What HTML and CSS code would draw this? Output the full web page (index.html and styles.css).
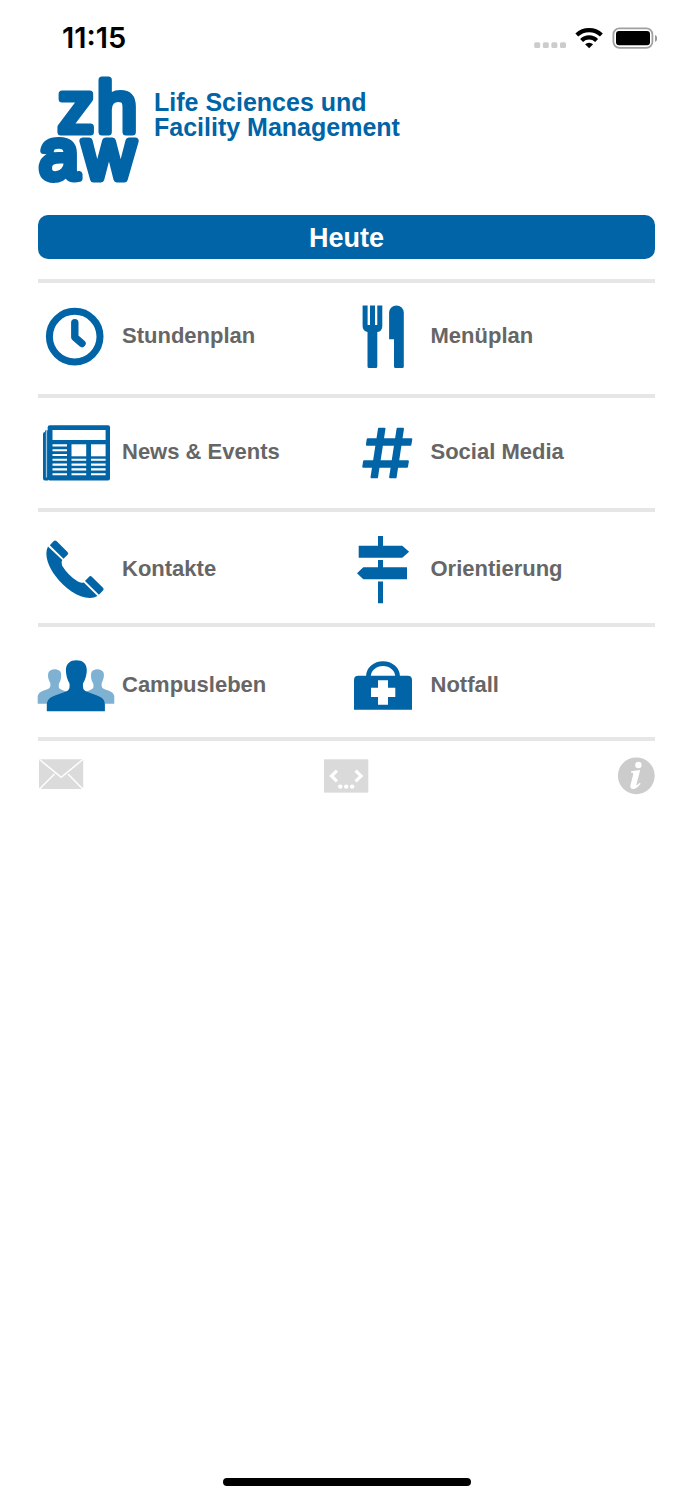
FILE: index.html
```html
<!DOCTYPE html>
<html lang="de">
<head>
<meta charset="utf-8">
<meta name="viewport" content="width=device-width, initial-scale=1">
<title>ZHAW Life Sciences und Facility Management</title>
<link rel="stylesheet" href="styles.css">
</head>
<body>
<div class="screen">
  <div class="status">
    <time class="status__time">11:15</time>
    <div class="status__icons">
      <svg width="32" height="24" viewBox="534 25 32 24" fill="#ccc" aria-hidden="true">
        <rect x="534.2" y="41.3" width="6" height="5.8" rx="1.5"/><rect x="542.8" y="41.3" width="6" height="5.8" rx="1.5"/><rect x="551.4" y="41.3" width="6" height="5.8" rx="1.5"/><rect x="560" y="41.3" width="6" height="5.8" rx="1.5"/>
      </svg>
      <svg width="28" height="24" viewBox="575 25 28 24" aria-hidden="true">
        <g fill="none" stroke="#000" stroke-width="4.2"><path d="M576.8 34a18 18 0 0 1 24.6 0"/><path d="M581.6 39.400a10.800 10.800 0 0 1 15 0"/></g>
        <path d="M589.100 47.200l-4-3.900a6 6 0 0 1 8 0z"/>
      </svg>
      <svg width="45" height="24" viewBox="612 25 45 24" aria-hidden="true">
        <rect x="613.400" y="27.400" width="39" height="19.400" rx="6" fill="none" stroke="#a0a0a0" stroke-width="1.800"/>
        <rect x="616" y="30" width="34" height="14.200" rx="3"/>
        <path d="M655 34v7q2.300-1 2.300-3.500t-2.300-3.500z" fill="#999"/>
      </svg>
    </div>
  </div>

  <main class="content">
    <header class="brand">
      <svg class="brand__logo" width="102" height="110" viewBox="37 75 102 110" role="img" aria-label="zhaw">
        <text x="58 97" y="132">zh</text>
        <text x="39 83" y="179">aw</text>
      </svg>
      <h1 class="brand__name">Life Sciences und<br>Facility Management</h1>
    </header>

    <button class="today" type="button">Heute</button>

    <nav class="menu">
      <div class="menu__row">
        <a class="item" href="#stundenplan">
          <svg class="item__icon" viewBox="38 296 84 80" aria-hidden="true">
            <g fill="none" stroke="#0064a6"><circle cx="74.700" cy="336.600" r="25.300" stroke-width="7"/><path d="M74.800 322.800V337.200L82 343.600" stroke-width="7.400" stroke-linecap="round" stroke-linejoin="round"/></g>
          </svg>
          <span>Stundenplan</span>
        </a>
        <a class="item" href="#menueplan">
          <svg class="item__icon" viewBox="347 296 84 80" aria-hidden="true">
            <path d="M362.600 305.500H367.600V325H370V305.500H375V325H377.300V305.500H382.300V326Q382.300 331.500 377.300 332V366.500Q377.300 368 375.800 368H369Q367.500 368 367.500 366.500V332Q362.600 331 362.600 326Z"/>
            <path d="M389.100 339.200V312.800A7.300 7.300 0 0 1 403.800 312.800V366.500Q403.800 368 402.300 368H395.500Q394 368 394 366.500V339.200Z"/>
          </svg>
          <span>Menüplan</span>
        </a>
      </div>
      <div class="menu__row">
        <a class="item" href="#news">
          <svg class="item__icon" viewBox="38 412 84 80" aria-hidden="true">
            <path d="M43 434q0-2 2-2V430.500h3V480.500H45q-2 0-2-2z"/>
            <path d="M46.500 431v46.500" fill="none" stroke="#9dc3de" stroke-width="1.300"/>
            <rect x="47.700" y="425.300" width="62.300" height="55.200" rx="2"/>
            <g fill="#fff"><rect x="52.500" y="430" width="53.100" height="10"/><rect x="71.500" y="444.300" width="14.700" height="12"/><rect x="91" y="444.300" width="14.600" height="12"/></g>
            <g fill="none" stroke="#fff" stroke-width="2.100">
              <path d="M52.500 445.400H67M52.500 450.200H67M52.500 455H67M52.500 459.800H67M52.500 464.600H67M52.500 469.400H67M52.500 474.200H67"/>
              <path d="M71.500 459.800H86.200M71.500 464.600H86.200M71.500 469.400H86.200M71.500 474.200H86.200M91 459.800H105.600M91 464.600H105.600M91 469.400H105.600M91 474.200H105.600"/>
            </g>
          </svg>
          <span>News &amp; Events</span>
        </a>
        <a class="item" href="#social">
          <svg class="item__icon" viewBox="347 412 84 80" aria-hidden="true">
            <g stroke="#0064a6" stroke-width="2" stroke-linejoin="round">
              <path d="M379 428.700H384.500L377 477.300H371.500ZM397.600 428.700H403L395.600 477.300H390.100Z"/>
              <path d="M367.700 439.300H411.300L410.400 444.700H366.900ZM364.100 461.300H407.900L407 466.700H363.300Z"/>
            </g>
          </svg>
          <span>Social Media</span>
        </a>
      </div>
      <div class="menu__row">
        <a class="item" href="#kontakte">
          <svg class="item__icon" viewBox="38 529 84 80" aria-hidden="true">
            <path d="M48 546.500L62.300 560Q60.800 562 62 565.500Q68 575.500 77.500 581.300Q80.500 583.300 83.800 582.400L97.500 596Q94 598 90 598C78 598 64.500 588 55.500 576C49 567.500 43.500 555 48 546.500Z"/>
            <path d="M49.800 545.300L53.600 541.200Q55 539.700 56.500 541.100L67.500 551.900Q68.900 553.300 67.600 554.700L63.500 558.800ZM85 580.900L88.900 576.900Q90.300 575.400 91.800 576.800L103 587.700Q104.400 589.100 103 590.500L98.900 594.700Z"/>
          </svg>
          <span>Kontakte</span>
        </a>
        <a class="item" href="#orientierung">
          <svg class="item__icon" viewBox="347 529 84 80" aria-hidden="true">
            <path d="M378 536H383V545.700H402.300L409.100 551.700L402.300 557.700H358.700V545.700H378ZM378 560H383V567.300H407V579.300H363.300L357 573.300L363.300 567.300H378ZM378 581.600H383V603.200H378Z"/>
          </svg>
          <span>Orientierung</span>
        </a>
      </div>
      <div class="menu__row">
        <a class="item" href="#campusleben">
          <svg class="item__icon" viewBox="38 645 84 80" aria-hidden="true">
            <path fill="#7fb1d3" d="M37.700 703.800V696Q38.500 692.500 42.500 691L48 689C50.500 688 50.600 686 50.300 683C47.500 678 48 675 48.300 673C50 668 59.500 668 61 673C61.600 677 61 680 58.800 684V687.500C59.500 689.500 64 690.500 70 693L50 703.800ZM114.300 703.800V696Q113.500 692.500 109.500 691L104 689C101.500 688 101.400 686 101.700 683C104.300 678 104 675 103.700 673C102 668 92.500 668 91.200 673C90.600 677 91.200 680 93.400 684V687.500C92.500 689.500 89 690.500 83 693L102 703.800Z"/>
            <path d="M46.800 711.300V704.500C47.500 699 50 697.500 55 695.500L66 691.500C69.500 690 69.800 688 69.500 683.500C67 679.500 65.900 674 65.900 670C66 663.500 70.500 660.300 76.300 660.300C82.500 660.300 86.800 663.500 86.800 670C86.800 674 85.600 679.500 83 683.500C82.800 688 83 690 86.500 691.500L97 695.500C102 697.500 104.500 699 104.900 704.500V711.300Z"/>
          </svg>
          <span>Campusleben</span>
        </a>
        <a class="item" href="#notfall">
          <svg class="item__icon" viewBox="347 645 84 80" aria-hidden="true">
            <path d="M368.400 676.500A14.600 12.900 0 0 1 397.600 676.500" fill="none" stroke="#0064a6" stroke-width="4.800"/>
            <path d="M354 709.700V680Q354 675.700 358.300 675.700H407.700Q412 675.700 412 680V709.700Z"/>
            <path fill="#fff" d="M378 680.300H388V687.700H395.300V697H388V704.700H378V697H371V687.700H378Z"/>
          </svg>
          <span>Notfall</span>
        </a>
      </div>
    </nav>

    <footer class="tools">
      <button class="tools__button" type="button" aria-label="E-Mail">
        <svg width="46" height="38" viewBox="38 757 46 38" aria-hidden="true">
          <rect x="39" y="759.300" width="44.200" height="29.700" rx="1" fill="#dbdbdb"/>
          <path d="M39.500 759.500L61.200 777.400L82.800 759.500M39.500 789L54.500 774M82.800 789L68 774" fill="none" stroke="#fff" stroke-width="1.500"/>
        </svg>
      </button>
      <button class="tools__button" type="button" aria-label="Entwickler">
        <svg width="45" height="38" viewBox="324 757 45 38" aria-hidden="true">
          <rect x="324" y="759.300" width="44.300" height="33.300" fill="#dadada"/>
          <path d="M337 770.700L331.500 776L337 781.300M355.600 770.700L361.100 776L355.600 781.300" fill="none" stroke="#fff" stroke-width="3.200"/>
          <g fill="#fff"><circle cx="340.300" cy="786.600" r="2.200"/><circle cx="346.200" cy="786.600" r="2.200"/><circle cx="352.100" cy="786.600" r="2.200"/></g>
        </svg>
      </button>
      <button class="tools__button" type="button" aria-label="Info">
        <svg width="37" height="38" viewBox="619 757 37 38" aria-hidden="true">
          <circle cx="637.300" cy="775.800" r="18.400" fill="#ccc"/>
          <circle cx="639.400" cy="765" r="3.200" fill="#fff"/>
          <path fill="#fff" d="M632 771.300L641.200 770L637.500 784.200Q637 786.700 640.800 782.800L641.600 783.700Q637.500 789 634.200 789Q630.500 789 631.600 784.500L634.200 774.600Q634.600 772.600 632 772.600Z"/>
        </svg>
      </button>
    </footer>
  </main>

  <div class="home-bar"></div>
</div>
</body>
</html>
```

FILE: styles.css
```css
* {
  box-sizing: border-box;
}

body {
  margin: 0;
  background: #fff;
  color: #666;
  font-family: "Liberation Sans", Arial, sans-serif;
}

.screen {
  display: flex;
  flex-direction: column;
  min-height: 100vh;
  padding-bottom: 14px;
}

.status {
  display: flex;
  align-items: center;
  justify-content: space-between;
  height: 75px;
  padding: 0 36px 0 62px;
  color: #000;
}

.status__time {
  font: 600 29px/36px Inter, sans-serif;
}

.status__icons {
  display: flex;
  align-items: center;
  gap: 9px;
}

.content {
  padding: 0 38px;
}

.brand {
  display: flex;
  gap: 15px;
  margin-left: -1px;
}

.brand__logo {
  flex: none;
  overflow: visible;
  fill: #0064a6;
  stroke: #0064a6;
  stroke-width: 7px;
  stroke-linejoin: round;
  font-size: 72px;
}

.brand__name {
  margin: 0;
  padding-top: 15px;
  color: #0064a6;
  font-size: 25px;
  font-weight: 700;
  line-height: 25px;
}

.today {
  display: block;
  width: 100%;
  margin: 30px 0 20px;
  padding: 2px 0 0;
  border: 0;
  border-radius: 10px;
  background: #0064a6;
  color: #fff;
  font: 700 27px/42px "Liberation Sans", Arial, sans-serif;
}

.menu {
  display: grid;
  grid-auto-rows: 1fr;
  min-height: 462px;
  border-bottom: 4px solid #e6e6e6;
}

.menu__row {
  display: grid;
  grid-template-columns: 1fr 1fr;
  align-items: center;
  border-top: 4px solid #e6e6e6;
}

.menu__row:first-child {
  padding-bottom: 4px;
}

.menu__row:nth-child(2) {
  padding-bottom: 2px;
}

.menu__row:nth-child(3) {
  padding-top: 4px;
}

.menu__row:nth-child(4) {
  padding-top: 6px;
}

.item {
  display: flex;
  align-items: center;
  color: #666;
  font-size: 22px;
  font-weight: 700;
  line-height: 28px;
  text-decoration: none;
}

.item__icon {
  flex: none;
  width: 84px;
  height: 80px;
  overflow: visible;
  fill: #0064a6;
}

.tools {
  display: grid;
  grid-template-columns: 1fr auto 1fr;
  padding-top: 16px;
}

.tools__button {
  display: flex;
  padding: 0;
  border: 0;
  background: none;
}

.tools__button:last-child {
  justify-self: end;
}

.home-bar {
  width: 248px;
  height: 8px;
  margin: auto auto 0;
  border-radius: 4px;
  background: #000;
}
```
